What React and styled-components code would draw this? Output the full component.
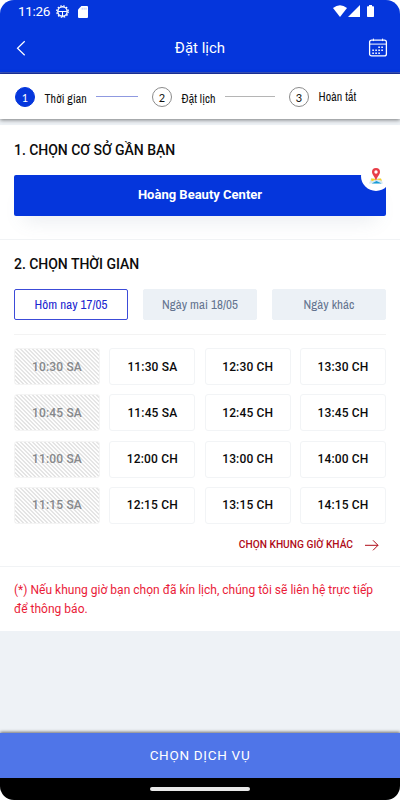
import React from 'react';
import styled, { createGlobalStyle } from 'styled-components';

const GlobalStyle = createGlobalStyle`
* {
	box-sizing: border-box;
}
body {
	margin: 0;
	background-color: #fff;
	font-family: Roboto, 'Liberation Sans', sans-serif;
}
button {
	font-family: inherit;
	border: none;
	padding: 0;
	background: none;
}
h1, h2, p {
	margin: 0;
}
`;

const narrow = `'Liberation Sans Narrow', 'Archivo Narrow', 'Roboto Condensed', Roboto, sans-serif`;

const Screen = styled.div`
display: flex;
flex-flow: column nowrap;
width: 400px;
height: 800px;
border-radius: 14px;
overflow: hidden;
background-color: #eef2f6;
`;

const StatusBar = styled.div`
display: flex;
align-items: center;
height: 23px;
flex-shrink: 0;
padding: 0 25px 0 18px;
color: #fff;
background-color: #0536dc;
`;

const Clock = styled.span`
font-size: 13.5px;
line-height: 23px;
width: 38px;
letter-spacing: -0.3px;
white-space: nowrap;
`;

const StatusIcons = styled.div`
display: flex;
align-items: center;
margin-left: ${(props) => props.$left};
& svg {
	display: block;
}
`;

const Header = styled.header`
display: grid;
grid-template-columns: 20px 1fr 20px;
align-items: center;
flex-shrink: 0;
height: 51px;
padding: 0 12px 1px;
color: #fff;
background-color: #0536dc;
border-bottom: 1px solid #1c35a8;
box-shadow: inset 0 -1px 0 #3a53bd;
& svg {
	display: block;
}
`;

const Title = styled.h1`
font-size: 15px;
font-weight: 400;
line-height: 20px;
letter-spacing: 0;
text-align: center;
`;

const Steps = styled.div`
display: flex;
align-items: center;
flex-shrink: 0;
height: 45px;
padding: 0 15px;
background-color: #fff;
box-shadow: 0 1px 4px rgba(0, 0, 0, 0.5);
position: relative;
`;

const StepNumber = styled.span`
display: flex;
align-items: center;
justify-content: center;
width: 20px;
height: 20px;
border-radius: 50%;
border: 1px solid ${(props) => (props.$active ? '#0536dc' : '#8b8b8b')};
background-color: ${(props) => (props.$active ? '#0536dc' : '#fff')};
color: ${(props) => (props.$active ? '#fff' : '#111')};
font-family: Lato, sans-serif;
font-size: 11px;
padding-top: 1px;
`;

const StepLabel = styled.span`
margin-left: 9.5px;
padding-top: ${(props) => (props.$raised ? '0' : '5px')};
width: ${(props) => props.$width}px;
font-family: ${narrow};
font-size: 12px;
line-height: 16px;
letter-spacing: 0.08px;
color: #111;
white-space: nowrap;
`;

const StepLine = styled.span`
height: 1px;
width: ${(props) => props.$width}px;
margin: 0 ${(props) => props.$after}px 1px 9px;
background-color: ${(props) => (props.$active ? '#8f99e0' : '#b5b5b5')};
`;

const Section = styled.section`
flex-shrink: 0;
height: ${(props) => props.$height}px;
padding: ${(props) => props.$top}px 14px 0;
background-color: #fff;
border-bottom: 1px solid #f1f3f5;
margin-top: ${(props) => props.$gap || 0}px;
`;

const SectionTitle = styled.h2`
font-size: 14px;
font-weight: 500;
line-height: 18px;
letter-spacing: -0.03px;
color: #0c0c0c;
`;

const Branch = styled.button`
display: block;
position: relative;
width: 100%;
height: 41px;
margin-top: 16px;
border-radius: 2px;
background-color: #0536dc;
box-shadow: 0 14px 20px -10px rgba(90, 110, 140, 0.14);
color: #fff;
font-size: 13px;
font-weight: 700;
padding-bottom: 2px;
`;

const MapBadge = styled.span`
position: absolute;
top: -14px;
right: -5px;
display: flex;
align-items: center;
justify-content: center;
width: 30px;
height: 30px;
border-radius: 50%;
background-color: #fff;
`;

const Days = styled.div`
display: grid;
grid-template-columns: repeat(3, 114px);
justify-content: space-between;
padding: 16px 0 14px;
border-bottom: 1px solid #f3f3f3;
`;

const Day = styled.button`
height: 31px;
border-radius: 2px;
border: 1px solid ${(props) => (props.$active ? '#3c4bd8' : '#ecf1f6')};
background-color: ${(props) => (props.$active ? '#fff' : '#ecf1f6')};
color: ${(props) => (props.$active ? '#1a25cf' : '#64748f')};
font-family: ${narrow};
font-size: 13px;
line-height: 29px;
letter-spacing: 0.05px;
white-space: nowrap;
`;

const Slots = styled.div`
display: grid;
grid-template-columns: repeat(4, 86px);
grid-auto-rows: 37px;
justify-content: space-between;
row-gap: 9.3px;
margin-top: 13px;
`;

const Slot = styled.button`
border-radius: 3px;
border: 1px solid ${(props) => (props.disabled ? '#f4f4f4' : '#f2f4f6')};
background: ${(props) => (props.disabled
	? 'repeating-linear-gradient(45deg, #e4e4e4 0 0.7px, #fdfdfd 1.3px 2.3px, #e4e4e4 2.83px)'
	: '#fff')};
color: ${(props) => (props.disabled ? '#86888b' : '#0a0a0a')};
font-size: 12px;
font-weight: 500;
letter-spacing: 0.15px;
`;

const OtherSlots = styled.button`
display: flex;
align-items: center;
gap: 12px;
margin: 13px 7px 0 auto;
color: #b00c18;
font-size: 10.2px;
font-weight: 500;
line-height: 16px;
white-space: nowrap;
`;

const Note = styled.p`
flex-shrink: 0;
height: 64px;
padding: 14px 14px 0;
background-color: #fff;
color: #ea1b38;
font-size: 12px;
line-height: 18.5px;
letter-spacing: 0.015px;
white-space: nowrap;
`;

const Submit = styled.button`
height: 45px;
flex-shrink: 0;
margin-top: auto;
padding-bottom: 2px;
background-color: #4f75e8;
box-shadow: 0 -1px 3px rgba(0, 0, 0, 0.55);
color: #fff;
font-size: 13.5px;
letter-spacing: 0.7px;
`;

const NavBar = styled.div`
display: flex;
align-items: center;
justify-content: center;
height: 22px;
flex-shrink: 0;
background-color: #000;
position: relative;
`;

const NavHandle = styled.span`
width: 100px;
height: 4px;
border-radius: 2px;
background-color: #e8e8e8;
`;

const GearIcon = () => (
	<svg width="13" height="14" viewBox="0 0 13 14" fill="none" stroke="#fff">
		<circle cx="6.5" cy="6.5" r="4.7" strokeWidth="1.4" />
		<circle cx="6.5" cy="6.5" r="5.8" strokeWidth="1.2" strokeDasharray="1.6 1.44" />
		<path d="M2.2 6.5h8.6M6.5 6.5v4.5" strokeWidth="1" />
	</svg>
);

const CardIcon = () => (
	<svg width="10" height="12" viewBox="0 0 10 12">
		<path d="M3.4 0H9a1 1 0 0 1 1 1v10a1 1 0 0 1-1 1H1a1 1 0 0 1-1-1V3.5Z" fill="#fff" />
		<path d="M4.2 1.7v2M6.1 1.7v2M8 1.7v2" stroke="#a8b8f3" strokeWidth=".8" />
	</svg>
);

const SignalIcons = () => (
	<svg width="42" height="13" viewBox="0 0 42 13" fill="#fff">
		<path d="M0 3Q7-2.5 14 3L7 12Z" />
		<path d="M27 0v12H15Z" />
		<path d="M36 0h3v1.3h1.3a.7.7 0 0 1 .7.7v9.3a.7.7 0 0 1-.7.7h-5.6a.7.7 0 0 1-.7-.7V2a.7.7 0 0 1 .7-.7H36Z" />
	</svg>
);

const BackIcon = () => (
	<svg width="20" height="20" viewBox="0 0 20 20" fill="none" stroke="#fff" strokeWidth="1.2">
		<path d="M12.7 3.3 5.5 10.2l7.2 7" />
	</svg>
);

const CalendarIcon = () => (
	<svg width="20" height="20" viewBox="0 0 20 20" fill="none" stroke="#fff">
		<rect x="1.6" y="2.2" width="16.8" height="15.7" rx="2" strokeWidth="1.3" />
		<path d="M1.6 6.1h16.8M5.4 .6v2.5M14.6 .6v2.5" strokeWidth="1" />
		<path d="M10.3 9.3h6M4.3 12.3h12M4.3 15.3h9" strokeWidth="1.5" strokeDasharray="1.6 1.4" />
	</svg>
);

const MapPinIcon = () => (
	<svg width="16" height="16" viewBox="0 0 16 16">
		<path d="M3 10.5h10l2 5H1Z" fill="#d6e9f2" />
		<path d="m3 10.5 4 .2 6.8 2-.8-2.2-3 .2-6.4 2.5Z" fill="#ffd21f" />
		<path d="M3.7 15.5 8.5 13l5.3 2.5Z" fill="#169bd7" />
		<path d="M8 0a4 4 0 0 0-4 4c0 3 3.2 4.7 4 9 .8-4.3 4-6 4-9a4 4 0 0 0-4-4Z" fill="#e83e48" />
		<circle cx="8" cy="4" r="1.7" fill="#fff" />
	</svg>
);

const ArrowIcon = () => (
	<svg width="14" height="12" viewBox="0 0 14 12" fill="none" stroke="#b00c18" strokeWidth="1">
		<path d="M0 6.3h13M8 1.3l5 5-5 5" />
	</svg>
);

const slots = [
	['10:30 SA', '11:30 SA', '12:30 CH', '13:30 CH'],
	['10:45 SA', '11:45 SA', '12:45 CH', '13:45 CH'],
	['11:00 SA', '12:00 CH', '13:00 CH', '14:00 CH'],
	['11:15 SA', '12:15 CH', '13:15 CH', '14:15 CH'],
];

const App = () => {
	return (
		<>
		<GlobalStyle />
		<Screen>
			<StatusBar>
				<Clock>11:26</Clock>
				<StatusIcons $left="0px"><GearIcon /></StatusIcons>
				<StatusIcons $left="9px"><CardIcon /></StatusIcons>
				<StatusIcons $left="auto"><SignalIcons /></StatusIcons>
			</StatusBar>
			<Header>
				<BackIcon />
				<Title>Đặt lịch</Title>
				<CalendarIcon />
			</Header>
			<Steps>
				<StepNumber $active>1</StepNumber>
				<StepLabel $width={42.5}>Thời gian</StepLabel>
				<StepLine $active $width={42} $after={14} />
				<StepNumber>2</StepNumber>
				<StepLabel $width={34.5}>Đặt lịch</StepLabel>
				<StepLine $width={50} $after={14} />
				<StepNumber>3</StepNumber>
				<StepLabel $raised $width={40}>Hoàn tất</StepLabel>
			</Steps>
			<Section $height={115} $top={16} $gap={6}>
				<SectionTitle>1. CHỌN CƠ SỞ GẦN BẠN</SectionTitle>
				<Branch>
					Hoàng Beauty Center
					<MapBadge><MapPinIcon /></MapBadge>
				</Branch>
			</Section>
			<Section $height={327} $top={15}>
				<SectionTitle>2. CHỌN THỜI GIAN</SectionTitle>
				<Days>
					<Day $active>Hôm nay 17/05</Day>
					<Day>Ngày mai 18/05</Day>
					<Day>Ngày khác</Day>
				</Days>
				<Slots>
					{slots.map((row) => row.map((time, i) => (
						<Slot key={time} disabled={i === 0}>{time}</Slot>
					)))}
				</Slots>
				<OtherSlots>
					CHỌN KHUNG GIỜ KHÁC
					<ArrowIcon />
				</OtherSlots>
			</Section>
			<Note>
				(*) Nếu khung giờ bạn chọn đã kín lịch, chúng tôi sẽ liên hệ trực tiếp
				<br />
				để thông báo.
			</Note>
			<Submit>CHỌN DỊCH VỤ</Submit>
			<NavBar><NavHandle /></NavBar>
		</Screen>
		</>
	);
}

export default App;
